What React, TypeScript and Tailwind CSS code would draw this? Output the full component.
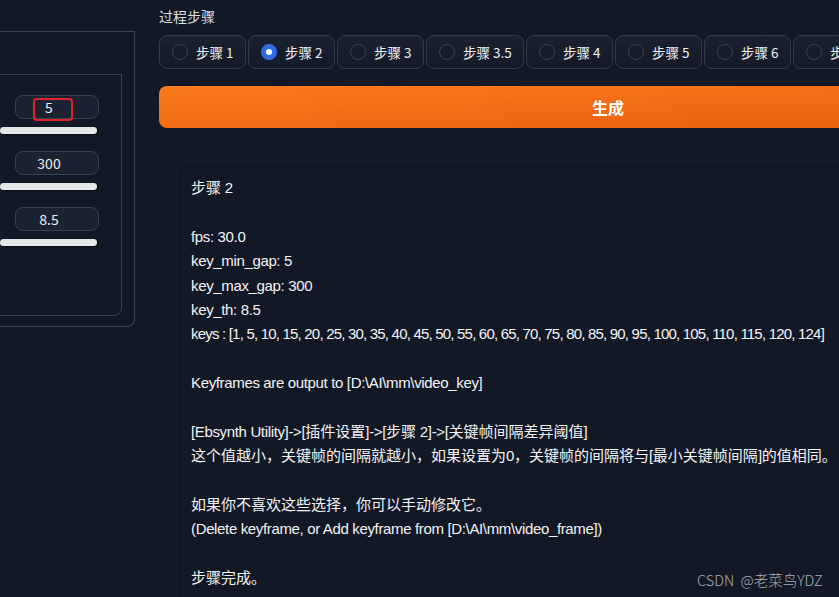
import React from "react";

const CJK = /[\u3000-\u303f\u4e00-\u9fff\uff00-\uffef]/;

function splitRuns(s: string): { cjk: boolean; text: string }[] {
  const runs: { cjk: boolean; text: string }[] = [];
  for (const ch of Array.from(s)) {
    const c = CJK.test(ch);
    const last = runs[runs.length - 1];
    if (last && last.cjk === c) last.text += ch;
    else runs.push({ cjk: c, text: ch });
  }
  return runs;
}

function Line({ text, tight }: { text: string; tight?: boolean }) {
  return (
    <div className="h-[24.4px] leading-[24.4px] whitespace-pre">
      {splitRuns(text).map((r, i) =>
        r.cjk ? (
          <span key={i} className="text-[15px] [font-family:'Noto_Sans_CJK_SC',sans-serif]">
            {r.text}
          </span>
        ) : (
          <span
            key={i}
            className={
              tight
                ? "text-[15px] tracking-[-0.8px] [font-family:'Liberation_Sans',Arial,sans-serif]"
                : "text-[15px] tracking-[-0.35px] [font-family:'Liberation_Sans',Arial,sans-serif]"
            }
          >
            {r.text}
          </span>
        )
      )}
    </div>
  );
}

const outputLines = [
  "步骤 2",
  "",
  "fps: 30.0",
  "key_min_gap: 5",
  "key_max_gap: 300",
  "key_th: 8.5",
  "keys : [1, 5, 10, 15, 20, 25, 30, 35, 40, 45, 50, 55, 60, 65, 70, 75, 80, 85, 90, 95, 100, 105, 110, 115, 120, 124]",
  "",
  "Keyframes are output to [D:\\AI\\mm\\video_key]",
  "",
  "[Ebsynth Utility]->[插件设置]->[步骤 2]->[关键帧间隔差异阈值]",
  "这个值越小，关键帧的间隔就越小，如果设置为0，关键帧的间隔将与[最小关键帧间隔]的值相同。",
  "",
  "如果你不喜欢这些选择，你可以手动修改它。",
  "(Delete keyframe, or Add keyframe from [D:\\AI\\mm\\video_frame])",
  "",
  "步骤完成。",
];

const steps = [
  { label: "步骤 1", w: "w-[87px]" },
  { label: "步骤 2", w: "w-[87px]", checked: true },
  { label: "步骤 3", w: "w-[87px]" },
  { label: "步骤 3.5", w: "w-[98px]" },
  { label: "步骤 4", w: "w-[87px]" },
  { label: "步骤 5", w: "w-[87px]" },
  { label: "步骤 6", w: "w-[87px]" },
  { label: "步骤 7", w: "w-[87px]" },
];

function SliderBlock({ value, marked }: { value: string; marked?: boolean }) {
  return (
    <div className="flex flex-col">
      <div className="relative ml-[15px] w-[84px] h-[24px] rounded-lg border border-[#374151] bg-[#1b2232] flex items-center justify-center pr-[16px] text-[14px] text-[#eef0f3] [font-family:'Noto_Sans_CJK_SC',sans-serif]">
        {value}
        {marked && (
          <div className="absolute left-[17px] top-[2px] w-[40px] h-[23px] rounded-[4px] border-2 border-[#e0252a]" />
        )}
      </div>
      <div className="mt-[8px] w-[97px] h-[7px] rounded-full bg-[#e6e7ea] shadow-[2px_1px_2px_rgba(0,0,0,0.6)]" />
    </div>
  );
}

export default function App() {
  return (
    <div className="relative w-[839px] h-[597px] overflow-hidden bg-[#111827] text-[#e5e7eb]">
      <div className="flex w-[1100px]">
        {/* Left panel */}
        <div className="mt-[31px] w-[135px] h-[296px] shrink-0 border-t border-r border-b border-[#3b4250] rounded-br-lg pt-[42px] pr-[12px] pb-[10px]">
          <div className="h-full border-t border-r border-b border-[#363d4b] rounded-br-lg pt-[20px] flex flex-col gap-[17px]">
            <SliderBlock value="5" marked />
            <SliderBlock value="300" />
            <SliderBlock value="8.5" />
          </div>
        </div>

        {/* Right column */}
        <div className="ml-[24px] w-[898px] shrink-0 flex flex-col">
          <div className="mt-[6px] h-[20px] leading-[20px] text-[14px] text-[#d9dce1] [font-family:'Noto_Sans_CJK_SC',sans-serif]">
            过程步骤
          </div>
          <div className="mt-[9px] flex gap-[2px]">
            {steps.map((s) => (
              <div
                key={s.label}
                className={`${s.w} shrink-0 h-[34px] rounded-lg border border-[#333b4a] bg-gradient-to-b from-[#1b2130] to-[#141a28] flex items-center px-[12px] gap-[8px]`}
              >
                {s.checked ? (
                  <div className="w-[16px] h-[16px] rounded-full bg-[#2f6be6] flex items-center justify-center shrink-0">
                    <div className="w-[6px] h-[6px] rounded-full bg-white" />
                  </div>
                ) : (
                  <div className="w-[16px] h-[16px] rounded-full border border-[#3a4252] bg-[#161c2a] shrink-0" />
                )}
                <span className="text-[13.5px] text-[#eef0f3] whitespace-nowrap [font-family:'Noto_Sans_CJK_SC',sans-serif]">
                  {s.label}
                </span>
              </div>
            ))}
          </div>
          <div className="mt-[17px] h-[42px] rounded-lg bg-gradient-to-br from-[#f97a1c] to-[#e85d0c] flex items-center justify-center text-white text-[16px] font-bold [font-family:'Noto_Sans_CJK_SC',sans-serif]">
            生成
          </div>
          <div className="mt-[38px] ml-[21px] w-[860px] h-[460px] rounded-lg border border-[#0b0f18] bg-[#121826] pt-[8px] pl-[10px] text-[#f3f4f6]">
            {outputLines.map((l, i) => (
              <Line key={i} text={l} tight={l.startsWith("keys")} />
            ))}
          </div>
        </div>
      </div>

      <div className="absolute left-[697px] top-[569px] text-[14.5px] font-light text-[#a9aeb7] [font-family:'Noto_Sans_CJK_SC',sans-serif] whitespace-pre">
        CSDN  @老菜鸟YDZ
      </div>
    </div>
  );
}
